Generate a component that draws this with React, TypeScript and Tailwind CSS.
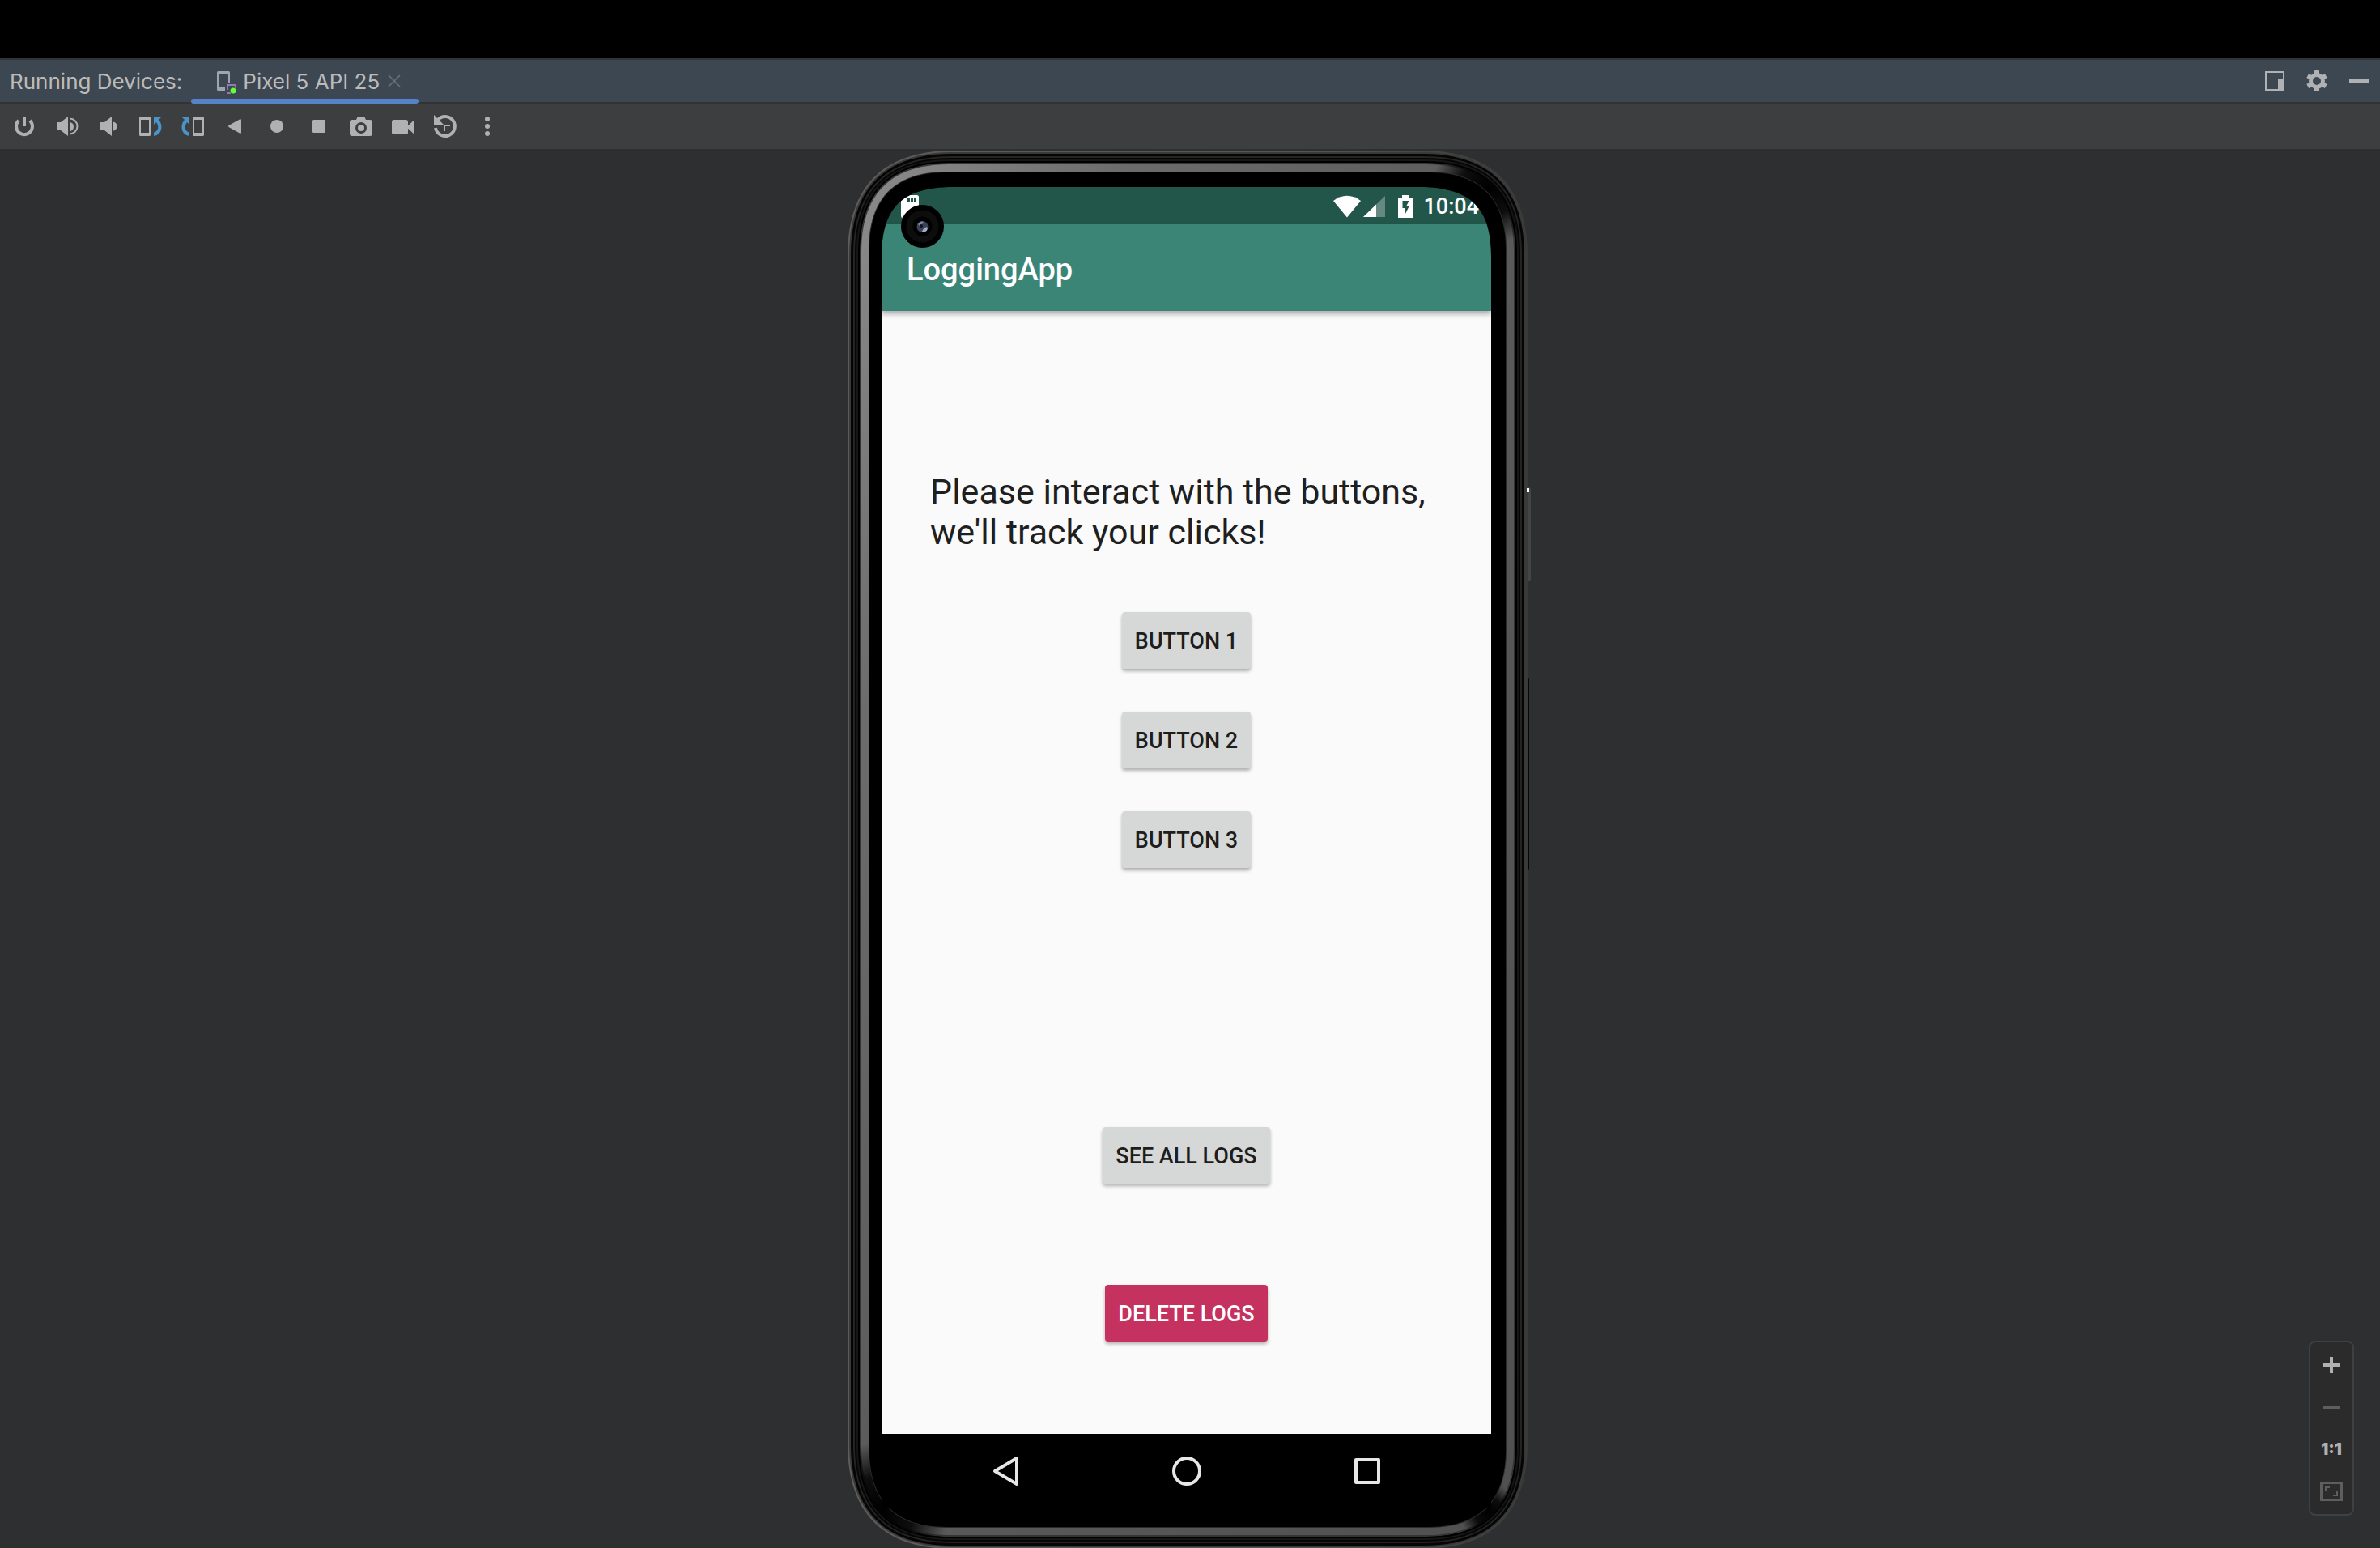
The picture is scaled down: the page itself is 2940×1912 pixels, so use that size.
import type { ReactNode } from 'react';

function Icon({ children, className = 'text-[#afb1b3]' }: { children: ReactNode; className?: string }) {
  return (
    <svg viewBox="0 0 32 32" className={`size-8 shrink-0 ${className}`} fill="currentColor" aria-hidden="true">
      {children}
    </svg>
  );
}

function RotateArt() {
  return (
    <>
      <path fillRule="evenodd" d="M3.5 4h11A1.5 1.5 0 0 1 16 5.500v21a1.500 1.500 0 0 1-1.500 1.500h-11A1.500 1.500 0 0 1 2 26.500v-21A1.500 1.500 0 0 1 3.500 4ZM4 8v16h10V8Z" />
      <g fill="#4a94c8">
        <path d="M20 4h10l-4 4c5.500 5.500 5 18.500-6 20v-4.500c5.500-1 7-7.500 3-12.500L20 14Z" />
      </g>
    </>
  );
}

const tools: { label: string; art: ReactNode }[] = [
  {
    label: 'Power',
    art: (
      <>
        <path d="M9 9a10 10 0 1 0 14 0" fill="none" stroke="currentColor" strokeWidth="4" />
        <path d="M14 4h4v12h-4z" />
      </>
    ),
  },
  {
    label: 'Volume up',
    art: (
      <>
        <path d="M4 11h5l9-7v24l-9-7H4Z" />
        <path d="M20 11a5 5.500 0 0 1 0 11Z" />
        <path d="M20 6.500a9.500 9.500 0 0 1 0 19" fill="none" stroke="currentColor" strokeWidth="2" />
      </>
    ),
  },
  {
    label: 'Volume down',
    art: (
      <>
        <path d="M6 11h5l9-7v24l-9-7H6Z" />
        <path d="M21.500 10.500a5 5.500 0 0 1 0 11Z" />
      </>
    ),
  },
  { label: 'Rotate left', art: <RotateArt /> },
  {
    label: 'Rotate right',
    art: (
      <g transform="matrix(-1 0 0 1 32 0)">
        <RotateArt />
      </g>
    ),
  },
  { label: 'Back', art: <path d="M8.500 15 22 7.500q2-.8 2 1v15q0 1.800-2 1L8.500 17q-1-1 0-2Z" /> },
  { label: 'Home', art: <circle cx="16" cy="16" r="8" /> },
  { label: 'Overview', art: <rect x="8" y="8" width="16" height="16" rx="1.500" /> },
  {
    label: 'Take screenshot',
    art: (
      <>
        <path
          fillRule="evenodd"
          d="M13 4h6q1 0 1.600 1L22 8h5a3 3 0 0 1 3 3v14a3 3 0 0 1-3 3H5a3 3 0 0 1-3-3V11a3 3 0 0 1 3-3h5l1.400-3q.6-1 1.600-1ZM16 11a7 7 0 1 0 0 14a7 7 0 1 0 0-14Z"
        />
        <circle cx="16" cy="18" r="4" />
      </>
    ),
  },
  {
    label: 'Record screen',
    art: (
      <>
        <rect x="2" y="8" width="20" height="18" rx="2.500" />
        <path d="M20 17 30 8v18Z" />
      </>
    ),
  },
  {
    label: 'Snapshots',
    art: (
      <>
        <path d="M4 18a12 12 0 1 0 2.500-9.500" fill="none" stroke="currentColor" strokeWidth="4" />
        <path d="M2 2v12h12Z" />
        <path d="M22 15h-7v7" fill="none" stroke="currentColor" strokeWidth="2" />
      </>
    ),
  },
  {
    label: 'More',
    art: (
      <>
        <circle cx="16" cy="7" r="3" />
        <circle cx="16" cy="16" r="3" />
        <circle cx="16" cy="25" r="3" />
      </>
    ),
  },
];

const windowActions: { label: string; art: ReactNode }[] = [
  {
    label: 'View mode',
    art: <path fillRule="evenodd" d="M4 4h24v24H4ZM6 6v20h14V14h6V6Z" />,
  },
  {
    label: 'Settings',
    art: (
      <>
        <circle cx="16" cy="16" r="7.500" fill="none" stroke="currentColor" strokeWidth="5" />
        {[0, 60, 120, 180, 240, 300].map((a) => (
          <rect key={a} x="13" y="3" width="6" height="6" rx="0.500" transform={`rotate(${a} 16 16)`} />
        ))}
      </>
    ),
  },
  { label: 'Hide', art: <path d="M4 14h24v4H4z" /> },
];

function IconButton({ label, children }: { label: string; children: ReactNode }) {
  return (
    <button type="button" aria-label={label} className="grid h-13 w-13 place-items-center">
      {children}
    </button>
  );
}

/* Rounded rectangle with continuous-curvature corners. */
function squircle(x: number, y: number, w: number, h: number, r: number, k: number) {
  const c = r * (1 - k);
  const R = x + w;
  const B = y + h;
  return (
    `M${x} ${y + r}C${x} ${y + c} ${x + c} ${y} ${x + r} ${y}H${R - r}` +
    `C${R - c} ${y} ${R} ${y + c} ${R} ${y + r}V${B - r}` +
    `C${R} ${B - c} ${R - c} ${B} ${R - r} ${B}H${x + r}` +
    `C${x + c} ${B} ${x} ${B - c} ${x} ${B - r}Z`
  );
}

const shell = (inset: number) =>
  squircle(inset, 2 + inset, 840 - 2 * inset, 1727 - 2 * inset, 130 - inset * 1.3, 0.66);

function PhoneBody() {
  return (
    <svg viewBox="0 0 846 1728" className="absolute inset-0 size-full" aria-hidden="true">
      <defs>
        <linearGradient id="rim" x1="0" x2="1" y1="0" y2="0">
          <stop offset="0" stopColor="#5f5d5b" />
          <stop offset="0.7" stopColor="#555352" />
          <stop offset="1" stopColor="#3a3a39" />
        </linearGradient>
        <linearGradient id="band" x1="0" x2="1" y1="0" y2="1">
          <stop offset="0" stopColor="#8c8c8c" />
          <stop offset="0.2" stopColor="#6c6c6c" />
          <stop offset="0.5" stopColor="#5a5a5a" />
          <stop offset="1" stopColor="#505050" />
        </linearGradient>
        <radialGradient id="shade">
          <stop offset="0" stopColor="#000" />
          <stop offset="0.5" stopColor="#000" stopOpacity="0.85" />
          <stop offset="1" stopColor="#000" stopOpacity="0" />
        </radialGradient>
        <clipPath id="bandClip">
          <path d={shell(15)} />
        </clipPath>
      </defs>
      <rect x="836" y="418" width="8" height="116" rx="3" fill="#444546" />
      <rect x="836" y="653" width="6" height="238" rx="3" fill="#060606" />
      <path d={shell(0)} fill="url(#rim)" />
      <path d={shell(2)} fill="#393938" />
      <path d={shell(4)} fill="#050505" />
      <path d={shell(7)} fill="#242424" />
      <path d={shell(9)} fill="#060606" />
      <path d={shell(11)} fill="#161616" />
      <path d={shell(13)} fill="#000" />
      <rect x="839" y="419" width="3" height="5" fill="#fff" />
      <g clipPath="url(#bandClip)">
        <path d={shell(15)} fill="#353535" />
        <path d={shell(17)} fill="url(#band)" />
        <circle cx="792" cy="48" r="70" fill="url(#shade)" />
        <circle cx="40" cy="1682" r="85" fill="url(#shade)" />
        <circle cx="792" cy="1684" r="36" fill="url(#shade)" />
      </g>
      <path d={shell(26)} fill="#2a2a2a" />
      <path d={shell(27)} fill="#000" />
    </svg>
  );
}

function PhoneOverlay() {
  return (
    <svg viewBox="0 0 846 1728" className="pointer-events-none absolute inset-0 size-full" aria-hidden="true">
      <path d="M41 135V100A54 54 0 0 1 95 46h37v1C64 47 42 75 42 135Z" />
      <path d="M796 135V100A54 54 0 0 0 742 46h-37v1C773 47 795 75 795 135Z" />
      <circle cx="92.500" cy="95.500" r="26.500" />
      <circle cx="92.500" cy="95.500" r="20" fill="#0d0d0d" />
      <circle cx="92.500" cy="95.500" r="12" fill="#020203" />
      <circle cx="92.500" cy="96" r="7" fill="#3b4254" />
      <path d="M87 93q3-5 7-3l-4 6Z" fill="#7e89a5" />
      <path d="M92 102q1-4 6-6q2 4-2 6Z" fill="#a3aecb" />
      <circle cx="91" cy="95" r="2" fill="#10131c" />
    </svg>
  );
}

function AppButton({ children, danger = false }: { children: ReactNode; danger?: boolean }) {
  return (
    <button
      type="button"
      className={`h-[70px] rounded px-4 pt-[3px] text-[27px] font-medium shadow-[0_3px_4px_rgba(0,0,0,0.3)] ${
        danger ? 'bg-[#c5325f] text-white' : 'bg-[#d6d8d7] text-[#1d1d1d]'
      }`}
    >
      {children}
    </button>
  );
}

function StatusBar() {
  return (
    <div className="flex h-[46px] items-center bg-[#23564a] pt-0.5 pr-[15px] pl-6 text-white">
      <svg viewBox="0 0 22 28" className="h-7 w-[22px]" fill="currentColor" aria-hidden="true">
        <path fillRule="evenodd" d="M7 0h12.500A2.500 2.500 0 0 1 22 2.500v23a2.500 2.500 0 0 1-2.500 2.500h-17A2.500 2.500 0 0 1 0 25.500V7ZM8 3v6h3V3ZM12 3v6h3V3ZM16 3v6h3V3Z" />
      </svg>
      <svg viewBox="0 0 34 28" className="ml-auto h-7 w-[34px]" fill="currentColor" aria-hidden="true">
        <path d="M0 7Q17-5.500 34 7L17 27.500Z" />
      </svg>
      <svg viewBox="0 0 28 28" className="ml-[3px] size-7" fill="currentColor" aria-hidden="true">
        <path d="M27 1v26H0Z" opacity="0.300" />
        <path d="M16 11.500V27H0Z" />
      </svg>
      <svg viewBox="0 0 18 28" className="ml-[15px] h-7 w-[18px]" fill="currentColor" aria-hidden="true">
        <path fillRule="evenodd" d="M5 0h8v3h5v25H0V3h5ZM5.500 7v9H8v9l6-12h-3.500l3-6Z" />
      </svg>
      <span className="ml-[13px] text-[27px] leading-8 font-medium">10:04</span>
    </div>
  );
}

function Phone() {
  return (
    <section
      aria-label="Pixel 5 emulator"
      className="relative flex w-[846px] shrink-0 flex-col self-stretch pt-[47px] pr-[51px] pb-[50px] pl-[42px] font-[Roboto,sans-serif]"
    >
      <PhoneBody />
      <div className="relative flex grow flex-col overflow-hidden rounded-t-[60px]">
        <StatusBar />
        <header className="relative flex h-[107px] items-center bg-[#3b8577] px-[31px] pt-1.5 shadow-[0_4px_6px_rgba(0,0,0,0.3)]">
          <h1 className="text-[38px] font-medium text-white">LoggingApp</h1>
        </header>
        <div className="flex grow flex-col items-center bg-[#fafafa] pt-[198px] pb-[114px]">
          <p className="self-stretch px-[60px] text-[43px] leading-[50px] text-[#1f1f1f]">
            Please interact with the buttons, we'll track your clicks!
          </p>
          <div className="mt-[74px] flex flex-col items-center gap-[53px]">
            <AppButton>BUTTON 1</AppButton>
            <AppButton>BUTTON 2</AppButton>
            <AppButton>BUTTON 3</AppButton>
          </div>
          <div className="mt-auto flex flex-col items-center gap-[125px]">
            <AppButton>SEE ALL LOGS</AppButton>
            <AppButton danger>DELETE LOGS</AppButton>
          </div>
        </div>
        <nav aria-label="Android navigation" className="flex h-[91px] items-center justify-center gap-[127px] bg-black">
          <button type="button" aria-label="Back" className="grid size-20 w-24 place-items-center">
            <svg viewBox="0 0 40 40" className="size-10" fill="none" stroke="#e8e6e7" strokeWidth="4" strokeLinejoin="round" aria-hidden="true">
              <path d="M33 4v32L6 20Z" />
            </svg>
          </button>
          <button type="button" aria-label="Home" className="grid size-20 w-24 place-items-center">
            <svg viewBox="0 0 40 40" className="size-10" fill="none" stroke="#e8e6e7" strokeWidth="4" aria-hidden="true">
              <circle cx="20" cy="20" r="16" />
            </svg>
          </button>
          <button type="button" aria-label="Recent apps" className="grid size-20 w-24 place-items-center">
            <svg viewBox="0 0 40 40" className="size-10" fill="none" stroke="#e8e6e7" strokeWidth="4" strokeLinejoin="round" aria-hidden="true">
              <path d="M6 6h28v28H6Z" />
            </svg>
          </button>
        </nav>
      </div>
      <PhoneOverlay />
    </section>
  );
}

function ZoomControls() {
  return (
    <div className="absolute right-8 bottom-10 flex w-14 flex-col items-center rounded-lg border-2 border-[#3f4041] bg-[#2b2b2b] py-0.5">
      <IconButton label="Zoom in">
        <Icon>
          <path d="M14 6h4v8h8v4h-8v8h-4v-8H6v-4h8Z" />
        </Icon>
      </IconButton>
      <IconButton label="Zoom out">
        <Icon className="text-[#5d5e5f]">
          <path d="M6 14h20v4H6z" />
        </Icon>
      </IconButton>
      <button type="button" className="h-13 w-13 text-center text-[20px] font-black text-[#afb1b3]">
        1:1
      </button>
      <IconButton label="Zoom to fit">
        <Icon className="text-[#5d5e5f]">
          <path fillRule="evenodd" d="M2 4h28v24H2ZM5 7v18h22V7Z" />
          <path d="M8 10h6v2h-4v4H8ZM24 22h-6v-2h4v-4h2Z" />
        </Icon>
      </IconButton>
    </div>
  );
}

export default function App() {
  return (
    <div className="flex min-h-screen flex-col bg-[#2d2f31] font-[Inter,sans-serif]">
      <div className="h-[72px] bg-black" />
      <header className="flex h-14 border-y-2 border-[#323334] bg-[#3d4752] text-[26px] text-[#bbbbbb]">
        <span className="flex items-center pr-[11px] pl-3 whitespace-nowrap">Running Devices:</span>
        <div className="relative flex items-center pr-[22px] pl-7">
          <button type="button" className="flex items-center gap-1 whitespace-nowrap">
            <Icon className="text-[#9aa7b0]">
              <path fillRule="evenodd" d="M5.500 4h13A1.500 1.500 0 0 1 20 5.500V18h-2V8H6v16h8v4H5.500A1.500 1.500 0 0 1 4 26.500v-21A1.500 1.500 0 0 1 5.500 4Z" />
              <path d="M17 27v-6h10v6M16 31h5" fill="none" stroke="#9876b8" strokeWidth="2" />
              <circle cx="24" cy="28" r="4" fill="#2f5a2c" />
              <circle cx="24" cy="28" r="3.500" fill="#62ff3a" />
            </Icon>
            Pixel 5 API 25
          </button>
          <button type="button" aria-label="Close tab" className="ml-[10px]">
            <svg viewBox="0 0 16 16" className="size-4" fill="none" stroke="#6b747d" strokeWidth="1.500" aria-hidden="true">
              <path d="m1 1 14 14M15 1 1 15" />
            </svg>
          </button>
          <span className="absolute inset-x-0 -bottom-0.5 h-1.5 rounded-full bg-[#5483c9]" />
        </div>
        <div className="ml-auto flex">
          {windowActions.map((a) => (
            <IconButton key={a.label} label={a.label}>
              <Icon>{a.art}</Icon>
            </IconButton>
          ))}
        </div>
      </header>
      <div role="toolbar" aria-label="Device controls" className="flex h-14 items-center bg-[#3c3e40] pl-1">
        {tools.map((t) => (
          <IconButton key={t.label} label={t.label}>
            <Icon>{t.art}</Icon>
          </IconButton>
        ))}
      </div>
      <main className="relative flex grow justify-center">
        <Phone />
        <ZoomControls />
      </main>
    </div>
  );
}
